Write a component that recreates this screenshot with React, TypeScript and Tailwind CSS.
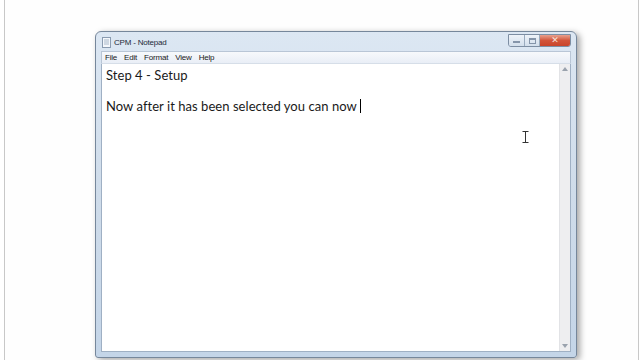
import React from 'react';

const menuItems = ['File', 'Edit', 'Format', 'View', 'Help'];

function NotepadIcon() {
  return (
    <svg width="9" height="11" viewBox="0 0 9 11">
      <rect x="0.5" y="0.5" width="8" height="10" fill="#f4f7fb" stroke="#8a9bb0" />
      <line x1="2" y1="3" x2="7" y2="3" stroke="#a9b8c9" />
      <line x1="2" y1="5" x2="7" y2="5" stroke="#a9b8c9" />
      <line x1="2" y1="7" x2="7" y2="7" stroke="#a9b8c9" />
    </svg>
  );
}

function CaptionButtons() {
  return (
    <div className="flex h-[13px] mt-[2px] border border-[#7d8ea3] rounded-b-[3px] overflow-hidden">
      <div className="w-[16px] bg-gradient-to-b from-[#eef3f9] to-[#d3dfec] border-r border-[#9aabbe] flex items-end justify-center pb-[3px]">
        <div className="w-[7px] h-[2px] bg-[#8595aa]" />
      </div>
      <div className="w-[15px] bg-gradient-to-b from-[#eef3f9] to-[#d3dfec] border-r border-[#9aabbe] flex items-center justify-center">
        <div className="w-[7px] h-[6px] border border-[#8595aa] border-t-2" />
      </div>
      <div className="w-[30px] bg-gradient-to-b from-[#e8a08e] via-[#d2543a] to-[#c9442a] flex items-center justify-center">
        <span className="text-[9px] leading-none font-bold text-[#f6e3dc] font-['DejaVu_Sans',sans-serif]">✕</span>
      </div>
    </div>
  );
}

export default function App() {
  return (
    <div className="w-[640px] h-[360px] bg-white overflow-hidden pl-[4px] pr-[1px]">
      <div className="h-full border-l border-r border-[#c8c8c8] bg-[#fefefe] pt-[31px]">
        <div className="ml-[90px] w-[482px] h-[327px] rounded-t-[6px] rounded-b-[3px] border border-[#76879b] bg-gradient-to-b from-[#dce7f3] via-[#cfdcea] to-[#c4d5e8] shadow-[3px_2px_6px_rgba(0,0,0,0.35)] flex flex-col px-[5px] pb-[5px]">
          {/* title bar */}
          <div className="h-[19px] flex items-start justify-between">
            <div className="flex items-center gap-[3px] pt-[5px] pl-[1px]">
              <NotepadIcon />
              <span className="text-[8px] leading-none text-[#1e2a38] font-['Liberation_Sans',sans-serif] tracking-[-0.2px]">CPM - Notepad</span>
            </div>
            <CaptionButtons />
          </div>
          {/* menu bar */}
          <div className="h-[13px] bg-gradient-to-b from-[#f7f9fc] to-[#e9eef6] border border-[#b9c6d6] border-b-[#d6dee8] flex items-center gap-[7px] pl-[3px]">
            {menuItems.map((item) => (
              <span key={item} className="text-[8px] leading-none text-[#1a1a1a] font-['Liberation_Sans',sans-serif] tracking-[-0.2px]">
                {item}
              </span>
            ))}
          </div>
          {/* edit area */}
          <div className="flex-1 flex bg-white border border-[#9fb0c4] border-t-0">
            <div className="flex-1 pl-[4px] pt-[3px] text-[13px] leading-[16px] text-[#1a1a1a] font-['Lato',sans-serif] tracking-[0.05px] relative">
              <div>Step 4 - Setup</div>
              <div className="h-[15px]" />
              <div>
                Now after it has been selected you can now
                <span className="inline-block w-[1px] h-[14px] bg-black align-[-2px] ml-[3px]" />
              </div>
              {/* mouse I-beam */}
              <svg className="absolute left-[420px] top-[67px]" width="7" height="12" viewBox="0 0 7 12">
                <path d="M0.5 0.5 H6.5 M3.5 0.5 V11.5 M0.5 11.5 H6.5" stroke="#333" strokeWidth="1" fill="none" />
              </svg>
            </div>
            {/* scrollbar */}
            <div className="w-[11px] bg-[#eeeef0] border-l border-[#e2e3e6] flex flex-col items-center justify-between py-[3px]">
              <svg width="6" height="4" viewBox="0 0 6 4">
                <path d="M0 4 L3 0 L6 4 Z" fill="#9aa2ad" />
              </svg>
              <svg width="6" height="4" viewBox="0 0 6 4">
                <path d="M0 0 L3 4 L6 0 Z" fill="#9aa2ad" />
              </svg>
            </div>
          </div>
        </div>
      </div>
    </div>
  );
}
